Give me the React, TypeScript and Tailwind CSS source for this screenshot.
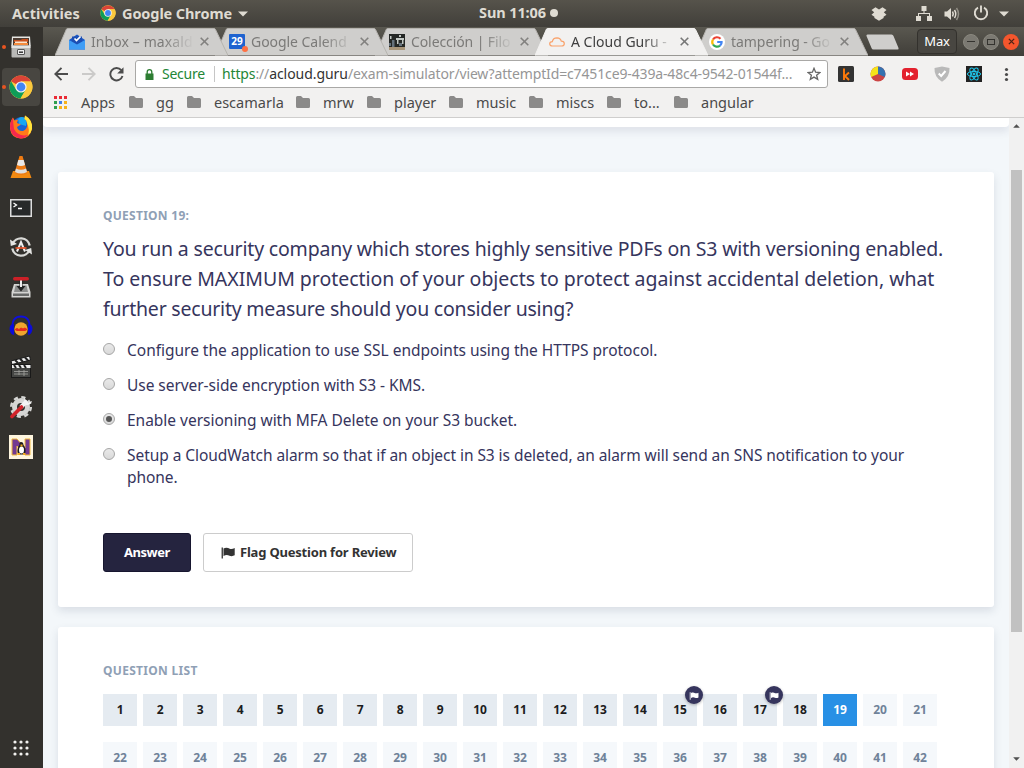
import type { ReactNode } from "react";

function Chrome({ className }: { className: string }) {
  return (
    <svg viewBox="0 0 24 24" className={className}>
      <circle cx="12" cy="12" r="11.5" fill="#fbc93d" />
      <path d="M12 12 L2.04 6.25 A11.5 11.5 0 0 1 22 6.5 L12 6.5 Z" fill="#db4437" />
      <path d="M2.04 6.25 A11.5 11.5 0 0 0 11.5 23.5 L16.8 14.7 L12 12 L7.2 14.7 Z" fill="#0f9d58" />
      <path d="M12 6.5 H22 A11.5 11.5 0 0 1 11.5 23.5 L16.8 14.7 Z" fill="#fbc93d" />
      <circle cx="12" cy="12" r="5.6" fill="#f4f4f4" />
      <circle cx="12" cy="12" r="4.4" fill="#4285f4" />
    </svg>
  );
}

function Caret({ className }: { className: string }) {
  return (
    <svg viewBox="0 0 10 6" className={className}>
      <path d="M0 0.5 H10 L5 5.5 Z" fill="currentColor" />
    </svg>
  );
}

function Flag({ className }: { className: string }) {
  return (
    <svg viewBox="0 0 14 12" className={className}>
      <path d="M0.600 0.500 H1.900 V11.500 H0.600 Z" fill="currentColor" />
      <path d="M2.500 1.600 C5 0.200 7 1 8.700 1.700 C10.400 2.400 12 1.800 13.700 1 V8.300 C12 9.100 10.400 9.500 8.500 8.700 C6.800 8 5 7.600 2.500 8.900 Z" fill="currentColor" />
    </svg>
  );
}

function TopBar() {
  return (
    <header className="flex h-[27px] shrink-0 items-center bg-linear-to-b from-[#56534b] to-[#413f3a] text-[14.5px] leading-none font-bold whitespace-nowrap text-[#dfdbd2]">
      <span className="ml-3 w-[88px] tracking-[0.06px]">Activities</span>
      <Chrome className="mb-0.5 h-4 w-4" />
      <span className="ml-1.5 w-[116px] tracking-[-0.1px]">Google Chrome</span>
      <Caret className="h-[6px] w-[10px]" />
      <span className="ml-[231px] w-[71px] pb-0.5 tracking-[-0.1px]">Sun 11:06</span>
      <span className="mb-px h-2 w-2 rounded-full bg-[#dfdbd2]" />
      <svg viewBox="0 0 16 14" className="ml-[313px] h-[14px] w-4" fill="currentColor">
        <path d="M4.5 0.3 L8 2.5 L11.5 0.3 L15.5 3 L12.8 5.3 L15.5 7.8 L12.6 9.7 V11 L8 13.8 L3.4 11 V9.7 L0.5 7.8 L3.2 5.3 L0.5 3 Z" />
      </svg>
      <svg viewBox="0 0 16 15" className="ml-[29px] h-[15px] w-4" fill="currentColor">
        <path d="M5.500 0 H10.500 V5 H8.500 V7 H14 V10 H16 V15 H11 V10 H13 V8 H3 V10 H5 V15 H0 V10 H2 V7 H7.500 V5 H5.500 Z" />
      </svg>
      <svg viewBox="0 0 16 14" className="ml-3 h-[14px] w-4">
        <path d="M0.500 4.500 H3 L7 1 V13 L3 9.500 H0.500 Z" fill="currentColor" />
        <path d="M8.500 4.500 Q10 7 8.500 9.500 M10.500 3 Q13 7 10.500 11" fill="none" stroke="currentColor" strokeWidth="1.500" />
        <path d="M12.500 1 Q16.500 7 12.500 13" fill="none" stroke="#918e85" strokeWidth="1.500" />
      </svg>
      <svg viewBox="0 0 16 16" className="mb-px ml-[13px] h-4 w-4" fill="none" stroke="currentColor" strokeWidth="1.900">
        <path d="M5 2.600 A6.200 6.200 0 1 0 11 2.600 M8 0.500 V7.500" />
      </svg>
      <Caret className="ml-[10px] h-[6px] w-[10px]" />
    </header>
  );
}

function DockItem({ children, active, running }: { children: ReactNode; active?: boolean; running?: boolean }) {
  return (
    <div className="relative flex h-10 w-[42px] shrink-0 items-center justify-center">
      {active && <div className="absolute inset-x-0.5 inset-y-px rounded-[4px] bg-[#484641]" />}
      {running && <div className="absolute top-[18px] left-0.5 h-1 w-1 rounded-full bg-[#e95420]" />}
      <div className="relative flex">{children}</div>
    </div>
  );
}

function Dock() {
  return (
    <nav className="flex w-[43px] shrink-0 flex-col bg-[#33312d]">
      <DockItem running>
        <svg viewBox="0 0 20 22" className="h-[22px] w-5">
          <path d="M1 0.500 H19 L19.700 10 H0.300 Z" fill="#e7e7e4" />
          <rect x="2" y="2" width="16" height="8" fill="#4d3c32" />
          <path d="M3 4 H10 L11 3 H17 V6 H3 Z" fill="#c6501f" />
          <path d="M3 7 H17 V9 H3 Z" fill="#f58b3d" />
          <path d="M4 5.500 H16 V7 H4 Z" fill="#fbe5cf" />
          <rect x="0.500" y="9.500" width="19" height="12" rx="1" fill="#b9b9b7" />
          <path d="M0.500 9.500 H19.500 V12 H0.500 Z" fill="#e4e4e2" />
          <rect x="6.500" y="13.500" width="7" height="5" rx="0.500" fill="#eee" stroke="#555" />
          <path d="M8 16.200 H12" stroke="#333" strokeWidth="1.500" />
        </svg>
      </DockItem>
      <DockItem active running><Chrome className="h-6 w-6" /></DockItem>
      <DockItem>
        <svg viewBox="0 0 24 24" className="h-6 w-6">
          <circle cx="12.500" cy="11.500" r="9.500" fill="#1765d8" />
          <path d="M9 4 Q12 0 18 4 L17 11 L10 9 Z" fill="#17a7f2" />
          <path d="M16 0.500 Q24 5 23 14 Q21 23.500 12 23.500 Q2 23 1 13.500 Q0.500 7 4 2.500 L5.500 5.500 L9 4.500 L8 8 L12 9.500 L8 12 Q9 16.500 14 16 Q19 14 18 8 Q18 5 15.500 4 Z" fill="#ff7a19" />
          <path d="M16 0.500 Q24 5 23 14 Q22 18 19 20 Q21 15 18 8 Q18 5 15.500 4 Z" fill="#ffe43b" />
          <path d="M1 11 Q1 20 9 23 Q15 24.500 19 20 Q9 22 5 14 Q4 8 4 2.500 Q1 7 1 11" fill="#f5294e" />
        </svg>
      </DockItem>
      <DockItem>
        <svg viewBox="0 0 22 24" className="h-6 w-[22px]">
          <path d="M3 16 H19 L21.500 23 H0.500 Z" fill="#f28a12" />
          <path d="M9.500 1 H12.500 L17.500 18 Q11 22 4.500 18 Z" fill="#ee7b13" />
          <path d="M8.300 5 H13.700 L15 10 Q11 12 7 10 Z" fill="#e9e9e9" />
          <path d="M6 13.500 Q11 16 16 13.500 L17 17 Q11 20 5 17 Z" fill="#dedede" />
        </svg>
      </DockItem>
      <DockItem>
        <svg viewBox="0 0 22 18" className="mt-px h-[18px] w-[22px]">
          <rect x="0.750" y="0.750" width="20.500" height="16.500" fill="#27292a" stroke="#dedede" strokeWidth="1.500" />
          <path d="M3.500 4 L6.500 6 L3.500 8 M8 9.500 H12" fill="none" stroke="#fff" strokeWidth="1.300" />
        </svg>
      </DockItem>
      <DockItem>
        <svg viewBox="0 0 24 24" className="h-6 w-6" fill="none">
          <path d="M3.500 9 A9 9 0 0 1 20.700 10.500 M20.500 15 A9 9 0 0 1 3.300 13.500" stroke="#d9d9d6" strokeWidth="2.300" />
          <path d="M1 4.500 L1.800 11 L8 9 Z M23 19.500 L22.200 13 L16 15 Z" fill="#e5e5e3" />
          <path d="M8 16.500 L12 7 L16 16.500" stroke="#eee" strokeWidth="2" />
          <path d="M6.500 13 H17.500" stroke="#e8552b" strokeWidth="1.700" />
        </svg>
      </DockItem>
      <DockItem>
        <svg viewBox="0 0 20 22" className="mb-px h-[22px] w-5">
          <path d="M3 8 H17 L19.500 16 V21.500 H0.500 V16 Z" fill="#d4d4d2" />
          <path d="M4.500 9.500 H15.500 L17 16 H3 Z" fill="#8d8e8d" />
          <path d="M2 17.500 H18 V20 H2 Z" fill="#686968" />
          <path d="M8.500 3 H11.500 V10 H14.500 L10 15.500 L5.500 10 H8.500 Z" fill="#222" />
          <path d="M9 3 H11 V11 H9 Z" fill="#eee" />
          <rect x="2" y="1" width="16" height="3.500" rx="1.700" fill="#cc2027" />
        </svg>
      </DockItem>
      <DockItem>
        <svg viewBox="0 0 24 22" className="mb-0.5 h-[22px] w-6" fill="none">
          <circle cx="12" cy="14" r="6.700" fill="#efa52d" />
          <path d="M6 14.500 L8 13.500 L10 14.500 L12 13 L14 14 L16 13 L18 14.500 L16 15.500 H8 Z" fill="#e6291d" stroke="#e6291d" />
          <path d="M3.500 12 Q3 1.500 12 1.500 Q21 1.500 20.500 12" stroke="#1010dc" strokeWidth="1.800" />
          <path d="M5 9 Q0.500 9 0.500 14 Q1 19.500 5 20 Z M19 9 Q23.500 9 23.500 14 Q23 19.500 19 20 Z" fill="#0b0bd9" />
        </svg>
      </DockItem>
      <DockItem>
        <svg viewBox="0 0 22 24" className="h-6 w-[22px]">
          <path d="M1 6 L19.500 1 L20.500 5 L2 9.500 Z" fill="#eee" stroke="#171717" />
          <path d="M5 5 L8 8 M10 3.500 L13 7 M15 2.500 L18 5.500" stroke="#222" strokeWidth="2" />
          <rect x="1.500" y="9.500" width="19" height="13" fill="#454644" stroke="#191919" />
          <path d="M2 10 H20.500 V13 H2 Z" fill="#eee" />
          <path d="M4 10 L6 13 M9 10 L11 13 M14 10 L16 13" stroke="#222" strokeWidth="2" />
          <path d="M4 16.500 H18 M4 19 H18 M9 15 V20 M14 15 V21" stroke="#a4a4a1" strokeWidth="0.800" />
        </svg>
      </DockItem>
      <DockItem>
        <svg viewBox="0 0 24 24" className="h-6 w-6" fill="none">
          <circle cx="12" cy="12" r="6.500" stroke="#d6d6d4" strokeWidth="5" />
          <circle cx="12" cy="12" r="9.800" stroke="#d6d6d4" strokeWidth="2.500" strokeDasharray="4.200 3.497" />
          <path d="M12 12 L18 6" stroke="#f4f4f4" strokeWidth="4" />
          <path d="M16 1 L16 6 L19 8 L23 6 A5 5 0 0 1 15 9" fill="#f4f4f4" />
          <path d="M3 21.500 L12.500 12" stroke="#d3232a" strokeWidth="3.600" strokeLinecap="round" />
        </svg>
      </DockItem>
      <DockItem>
        <svg viewBox="0 0 24 24" className="h-6 w-6">
          <rect width="24" height="24" fill="#fff6df" />
          <path d="M3 4 H8 L16 13 V4 H21 V20 H16 L8 11 V20 H3 Z" fill="#733a91" stroke="#f0b83c" />
          <path d="M12 7 Q14.500 7 14.500 10 Q17 13 16.500 17.500 L14 19.500 H11 L8.500 17.500 Q8 13 10.500 10 Q10 7 12 7 Z" fill="#1f1b1f" />
          <ellipse cx="12.500" cy="15" rx="2.500" ry="3.500" fill="#fff" />
          <path d="M8.500 19 H11 M14 19 H16.500 M11.500 10.500 H13.500" stroke="#f3a81b" strokeWidth="1.800" />
        </svg>
      </DockItem>
      <svg viewBox="0 0 16 16" className="mt-auto mb-3 ml-[13px] h-4 w-4" fill="#f2f1ef">
        {[2, 8, 14].map((y) => [2, 8, 14].map((x) => <circle key={`${x}-${y}`} cx={x} cy={y} r="1.600" />))}
      </svg>
    </nav>
  );
}

function Tab({ title, icon, selected, className, textClass }: { title: string; icon: ReactNode; selected?: boolean; className: string; textClass: string }) {
  return (
    <div className={`relative -ml-[13px] flex h-[29px] w-[173px] shrink-0 items-center ${className}`}>
      <svg viewBox="0 0 173 29" className="absolute inset-0 h-[29px] w-[173px]">
        <path d="M0 28.500 L11.500 2 Q12 1.500 13 1.500 H159 Q160 1.500 160.500 2.500 L173 28.500 Z" fill={selected ? "#f2f1f0" : "#cfcecc"} />
        <path d="M0 28.500 L11.500 2 Q12 1.500 13 1.500 H159 Q160 1.500 160.500 2.500 L173 28.500" fill="none" stroke={selected ? "#f2f1f0" : "#b5b3af"} />
      </svg>
      <span className="relative ml-[14px] flex h-4 w-4 shrink-0 items-center justify-center">{icon}</span>
      <span className={`relative ml-1.5 w-[103px] mask-r-from-70% text-[14px] leading-5 whitespace-nowrap ${textClass} ${selected ? "text-[#3f3f3f]" : "text-[#7b7a78]"}`}>{title}</span>
      <svg viewBox="0 0 9 9" className="relative ml-[6px] h-[9px] w-[9px]" stroke={selected ? "#777" : "#82817f"} strokeWidth="1.600">
        <path d="M0.700 0.700 L8.300 8.300 M8.300 0.700 L0.700 8.300" />
      </svg>
    </div>
  );
}

function WindowButton({ children, close }: { children: ReactNode; close?: boolean }) {
  return (
    <span className={`flex h-4 w-4 items-center justify-center rounded-full ${close ? "bg-[#f4562d] text-[#4b2317]" : "border border-[#8a887f] bg-[#7b7972] text-[#34332f]"}`}>
      {children}
    </span>
  );
}

function TabStrip() {
  return (
    <div className="flex h-[29px] shrink-0 bg-linear-to-b from-[#5a5850] to-[#403e39] pl-[25px]">
      <Tab title="Inbox – maxald" className="z-30" textClass="tracking-[0.1px]" icon={
        <svg viewBox="0 0 16 16" className="h-4 w-4">
          <path d="M0 6 L8 0.500 L16 6 V15.500 H0 Z" fill="#1a56c4" />
          <path d="M3 2.500 H13 V9 L8 12 L3 9 Z" fill="#1c4fb4" />
          <path d="M5.500 4.500 L7.500 6.500 L11.500 2.500" fill="none" stroke="#fff" strokeWidth="1.700" />
          <path d="M0 6 L8 10.500 L16 6 V15.500 H0 Z" fill="#3f9df5" />
        </svg>
      } />
      <Tab title="Google Calend" className="z-20" textClass="tracking-[-0.05px]" icon={
        <span className="relative flex h-[15px] w-4 items-center justify-center rounded-[1px] bg-[#1e63d0] text-[10px] font-bold text-white">
          29
          <span className="absolute -right-[3px] -bottom-[3px] h-1.5 w-1.5 rounded-full bg-[#ff7043]" />
        </span>
      } />
      <Tab title="Colección | Filo" className="z-10" textClass="tracking-[-0.1px]" icon={
        <svg viewBox="0 0 16 16" className="h-4 w-4">
          <rect width="16" height="16" fill="#242725" />
          <path d="M0 13 H16 V16 H0 Z" fill="#a89579" />
          <path d="M7 4 H15 V6 H7 Z M8 6 H9.500 V10 H8 Z M13 6 H14.500 V10 H13 Z M1 2 H2.500 V5 H1 Z M10 1 H12 V3 H10 Z" fill="#c2c8c4" />
          <path d="M3 6 H5.500 V13 H3 Z M0 9 H2 V12 H0 Z M10 9 H13 V12 H10 Z" fill="#65717b" />
        </svg>
      } />
      <Tab title="A Cloud Guru -" selected className="z-40" textClass="tracking-[0px]" icon={
        <svg viewBox="0 0 16 10" className="h-[10px] w-4" fill="none" stroke="#f9a26b" strokeWidth="1.200">
          <path d="M3.500 9 Q0.700 9 0.700 6.800 Q0.800 4.800 3.300 4.700 Q4 0.800 8 0.800 Q11.500 1 12.300 4.200 Q15.300 4.300 15.300 6.700 Q15.200 9 12.500 9 Z" />
        </svg>
      } />
      <Tab title="tampering - Go" className="z-10" textClass="tracking-[-0.05px]" icon={
        <svg viewBox="0 0 16 16" className="h-4 w-4" fill="none" strokeWidth="2.200">
          <circle cx="8" cy="8" r="8" fill="#fff" />
          <path d="M4 5.500 A4.700 4.700 0 0 1 11.500 4.800" stroke="#ea4335" />
          <path d="M4 5.500 A4.700 4.700 0 0 0 4 10.500" stroke="#fbbc05" />
          <path d="M4 10.500 A4.700 4.700 0 0 0 11 11.600" stroke="#34a853" />
          <path d="M11 11.600 Q12.800 10 12.600 8 H8.200" stroke="#4285f4" />
        </svg>
      } />
      <svg viewBox="0 0 34 16" className="mt-[7px] ml-[-2px] h-4 w-[34px]">
        <path d="M0.500 2 Q0 0.500 1.500 0.500 H25.500 Q27 0.500 27.500 2 L32.500 14 Q33 15.500 31.500 15.500 H7.500 Q6 15.500 5.500 14 Z" fill="#cfcecc" />
      </svg>
      <div className="ml-auto flex items-center gap-1 pr-[5px]">
        <span className="mr-[2px] flex h-[25px] w-[40px] items-center justify-center rounded-[4px] border border-[#33312d] bg-[#484641] pt-px text-[13px] tracking-[-0.2px] text-white">Max</span>
        <WindowButton><span className="h-px w-2 bg-current" /></WindowButton>
        <WindowButton><span className="h-1.5 w-2 border border-current" /></WindowButton>
        <WindowButton close>
          <svg viewBox="0 0 8 8" className="h-[7px] w-[7px]" stroke="currentColor" strokeWidth="1.500"><path d="M1 1 L7 7 M7 1 L1 7" /></svg>
        </WindowButton>
      </div>
    </div>
  );
}

function Toolbar() {
  return (
    <div className="flex h-9 shrink-0 items-center bg-[#f2f1f0] pl-[11px]">
      <svg viewBox="0 0 14 14" className="h-[14px] w-[14px]" fill="none" stroke="#4c4c4c" strokeWidth="1.900"><path d="M14 7 H1.500 M7.500 0.800 L1.300 7 L7.500 13.200" /></svg>
      <svg viewBox="0 0 14 14" className="ml-[14px] h-[14px] w-[14px]" fill="none" stroke="#cbcac9" strokeWidth="1.900"><path d="M0 7 H12.500 M6.500 0.800 L12.700 7 L6.500 13.200" /></svg>
      <svg viewBox="0 0 15 15" className="ml-[13px] h-[15px] w-[15px]" fill="none" stroke="#4c4c4c" strokeWidth="1.900">
        <path d="M12.300 3.200 A6.200 6.200 0 1 0 13.500 9" />
        <path d="M14.500 0.300 V6.600 H8.200 Z" fill="#4c4c4c" stroke="none" />
      </svg>
      <div className="ml-[11px] flex h-7 w-[693px] shrink-0 items-center rounded-[3px] border border-[#a9a8a6] bg-white text-[14px] leading-5 whitespace-nowrap text-[#969696]">
        <svg viewBox="0 0 9 11" className="ml-[9px] h-[11px] w-[9px]"><path d="M0.500 4.500 H8.500 V11 H0.500 Z" fill="#2d7d32" /><path d="M2.200 5 V3 A2.300 2.300 0 0 1 6.800 3 V5" fill="none" stroke="#2d7d32" strokeWidth="1.300" /></svg>
        <span className="ml-2 w-[52px] tracking-[-0.25px] text-[#238636]">Secure</span>
        <span className="h-4 w-px bg-[#c6c6c6]" />
        <span className="ml-[7px] w-[585px] tracking-[-0.14px]"><span className="text-[#238636]">https</span>://<span className="tracking-[-0.05px] text-[#333]">acloud.guru</span>/exam-simulator/view?attemptId=c7451ce9-439a-48c4-9542-01544f...</span>
        <svg viewBox="0 0 14 14" className="h-[14px] w-[14px]" fill="none" stroke="#666" strokeWidth="1.300"><path d="M7 1.300 L8.600 5.200 L12.900 5.500 L9.600 8.200 L10.700 12.400 L7 10.100 L3.300 12.400 L4.400 8.200 L1.100 5.500 L5.400 5.200 Z" /></svg>
      </div>
      <div className="ml-[10px] flex items-center gap-4">
        <svg viewBox="0 0 16 16" className="h-4 w-4"><rect width="16" height="16" rx="1.500" fill="#333" /><path d="M6 2.500 V14 M11 6.500 L7 10 L11 14" fill="none" stroke="#ff7a0a" strokeWidth="1.900" /></svg>
        <svg viewBox="0 0 16 16" className="h-4 w-4"><circle cx="8" cy="8" r="7.500" fill="#cc4444" /><path d="M8 8 V0.500 A7.500 7.500 0 0 1 14.800 11 Z" fill="#3572b0" /><path d="M8 8 V0.500 A7.500 7.500 0 0 0 1.200 11 Z" fill="#f5e21a" /></svg>
        <svg viewBox="0 0 16 16" className="h-4 w-4"><rect y="2" width="16" height="12" rx="3.500" fill="#e3212e" /><path d="M4 5.500 L8 8 L4 10.500 Z M8 5.500 L12 8 L8 10.500 Z" fill="#fff" /></svg>
        <svg viewBox="0 0 16 16" className="h-4 w-4"><path d="M8 0.500 L15.500 2 Q16 11 8 15.800 Q0 11 0.500 2 Z" fill="#b9b9b9" /><path d="M4.700 7.500 L7.200 10 L11.500 5" fill="none" stroke="#fff" strokeWidth="2" /></svg>
        <svg viewBox="0 0 16 16" className="h-4 w-4" fill="none" stroke="#1fc8ee" strokeWidth="1"><rect width="16" height="16" fill="#222" stroke="none" /><ellipse cx="8" cy="8" rx="6.600" ry="2.600" /><ellipse cx="8" cy="8" rx="6.600" ry="2.600" transform="rotate(60 8 8)" /><ellipse cx="8" cy="8" rx="6.600" ry="2.600" transform="rotate(120 8 8)" /><circle cx="8" cy="8" r="1" fill="#1fc8ee" /></svg>
        <svg viewBox="0 0 16 16" className="h-4 w-4" fill="#4a4a4a"><circle cx="8.500" cy="3.500" r="1.600" /><circle cx="8.500" cy="8.500" r="1.600" /><circle cx="8.500" cy="13.500" r="1.600" /></svg>
      </div>
    </div>
  );
}

const bookmarks = [
  { label: "gg", width: "w-[31px]" },
  { label: "escamarla", width: "w-[82px]" },
  { label: "mrw", width: "w-[44px]" },
  { label: "player", width: "w-[55px]" },
  { label: "music", width: "w-[53px]" },
  { label: "miscs", width: "w-[51px]" },
  { label: "to...", width: "w-[40px]" },
  { label: "angular", width: "w-[60px]" },
];

const appDots = ["#ea2a35", "#ea2a35", "#ea2a35", "#2f9e4f", "#3f7de8", "#f6b21b", "#2f9e4f", "#f6b21b", "#f6b21b"];

function Bookmarks() {
  return (
    <div className="flex h-[26px] shrink-0 items-center border-b border-[#cfcecd] bg-[#f2f1f0] pb-[5px] pl-[11px] text-[14.5px] leading-5 whitespace-nowrap text-[#4a4a4a]">
      <div className="grid w-[13px] grid-cols-3 gap-0.5">
        {appDots.map((c, i) => (
          <svg key={i} viewBox="0 0 3 3" className="h-[3px] w-[3px]"><rect width="3" height="3" fill={c} /></svg>
        ))}
      </div>
      <span className="ml-[14px] w-12">Apps</span>
      {bookmarks.map((b) => (
        <div key={b.label} className="flex shrink-0 items-center">
          <svg viewBox="0 0 14 12" className="h-3 w-[14px]" fill="#8b8a89"><path d="M0 1.500 Q0 0 1.500 0 H5 L7 2 H12.500 Q14 2 14 3.500 V10.500 Q14 12 12.500 12 H1.500 Q0 12 0 10.500 Z" /></svg>
          <span className={`ml-[13px] ${b.width}`}>{b.label}</span>
        </div>
      ))}
    </div>
  );
}

const options = [
  { lines: ["Configure the application to use SSL endpoints using the HTTPS protocol."], tracking: "tracking-[-0.02px]" },
  { lines: ["Use server-side encryption with S3 - KMS."], tracking: "tracking-[-0.05px]" },
  { lines: ["Enable versioning with MFA Delete on your S3 bucket."], tracking: "tracking-[-0.015px]", checked: true },
  { lines: ["Setup a CloudWatch alarm so that if an object in S3 is deleted, an alarm will send an SNS notification to your", "phone."], tracking: "tracking-[-0.055px]" },
];

const cardClass = "shrink-0 rounded-[3px] bg-white px-[45px] pt-[35px] shadow-[0_4px_9px_rgba(50,65,95,0.13)]";

function QuestionCard() {
  return (
    <section className={`h-[435px] ${cardClass}`}>
      <h2 className="text-[12px] leading-[18px] font-bold tracking-[0.27px] text-[#8fa0b5]">QUESTION 19:</h2>
      <div className="mt-[9px] text-[19.5px] leading-[30px] whitespace-nowrap text-[#36355d]">
        <p className="tracking-[-0.174px]">You run a security company which stores highly sensitive PDFs on S3 with versioning enabled.</p>
        <p className="tracking-[-0.03px]">To ensure MAXIMUM protection of your objects to protect against accidental deletion, what</p>
        <p className="tracking-[-0.21px]">further security measure should you consider using?</p>
      </div>
      <ul className="mt-[15px] flex flex-col gap-[13px] text-[15.5px] leading-[22px] whitespace-nowrap text-[#36355d]">
        {options.map((o) => (
          <li key={o.lines[0]} className="flex items-start">
            <span className="mt-1 mr-3 flex h-3 w-3 shrink-0 items-center justify-center rounded-full border border-[#a6a6a6] bg-linear-to-b from-[#e9e9e9] to-[#d9d9d9]">
              {o.checked && <span className="h-1.5 w-1.5 rounded-full bg-[#555]" />}
            </span>
            <div className={o.tracking}>{o.lines.map((l) => <div key={l}>{l}</div>)}</div>
          </li>
        ))}
      </ul>
      <div className="mt-[45px] flex gap-3 text-[13px] font-bold whitespace-nowrap">
        <button className="h-[39px] w-[88px] rounded-[3px] border border-[#17162f] bg-[#25243f] tracking-[-0.45px] text-white">Answer</button>
        <button className="flex h-[39px] w-[210px] items-center rounded-[3px] border border-[#ccc] bg-white pl-[17px] text-[#333]">
          <Flag className="h-3 w-[14px]" />
          <span className="ml-[5px] tracking-[-0.2px]">Flag Question for Review</span>
        </button>
      </div>
    </section>
  );
}

const numbers = Array.from({ length: 42 }, (_, i) => i + 1);

function cellStyle(n: number) {
  if (n === 19) return "bg-[#2890e5] text-white";
  return n < 19 ? "bg-[#e5ebf1] text-[#1c1c1c]" : "bg-[#f5f8fb] text-[#6f8299]";
}

function QuestionList() {
  return (
    <section className={`h-[200px] ${cardClass}`}>
      <h2 className="text-[12px] leading-[18px] font-bold tracking-[0.3px] text-[#8fa0b5]">QUESTION LIST</h2>
      <div className="mt-[14px] grid w-[834px] grid-cols-21 gap-x-1.5 gap-y-4">
        {numbers.map((n) => (
          <div key={n} className={`relative flex h-8 w-[34px] items-center justify-center pb-px text-[12px] font-bold tracking-[-0.2px] ${cellStyle(n)}`}>
            {n}
            {(n === 15 || n === 17) && (
              <span className="absolute -top-2 left-[22px] z-10 flex h-[18px] w-[18px] items-center justify-center rounded-full bg-[#36355d] text-white shadow-[0_1px_3px_rgba(0,0,0,0.3)]">
                <Flag className="mt-px h-2 w-[10px]" />
              </span>
            )}
          </div>
        ))}
      </div>
    </section>
  );
}

function Scrollbar() {
  return (
    <div className="flex w-[15px] shrink-0 flex-col items-center bg-[#f1f1f1] text-[#505050]">
      <Caret className="mt-[6px] h-1 w-[7px] rotate-180" />
      <div className="mt-[42px] h-[462px] w-[11px] bg-[#c1c1c1]" />
      <Caret className="mt-auto mb-[7px] h-1 w-[7px]" />
    </div>
  );
}

export default function App() {
  return (
    <div className="flex h-[768px] w-[1024px] flex-col overflow-hidden font-['Noto_Sans',sans-serif]">
      <TopBar />
      <div className="flex min-h-0 flex-1">
        <Dock />
        <div className="flex min-w-0 flex-1 flex-col">
          <TabStrip />
          <Toolbar />
          <Bookmarks />
          <div className="flex min-h-0 flex-1">
            <main className="flex min-w-0 flex-1 flex-col overflow-hidden bg-[#f3f7fa]">
              <div className="h-[9px] shrink-0 rounded-b-[4px] bg-white shadow-[0_4px_8px_rgba(50,50,93,0.12)]" />
              <div className="flex flex-col gap-5 pt-[45px] pr-[15px] pl-[15px]">
                <QuestionCard />
                <QuestionList />
              </div>
            </main>
            <Scrollbar />
          </div>
        </div>
      </div>
    </div>
  );
}
